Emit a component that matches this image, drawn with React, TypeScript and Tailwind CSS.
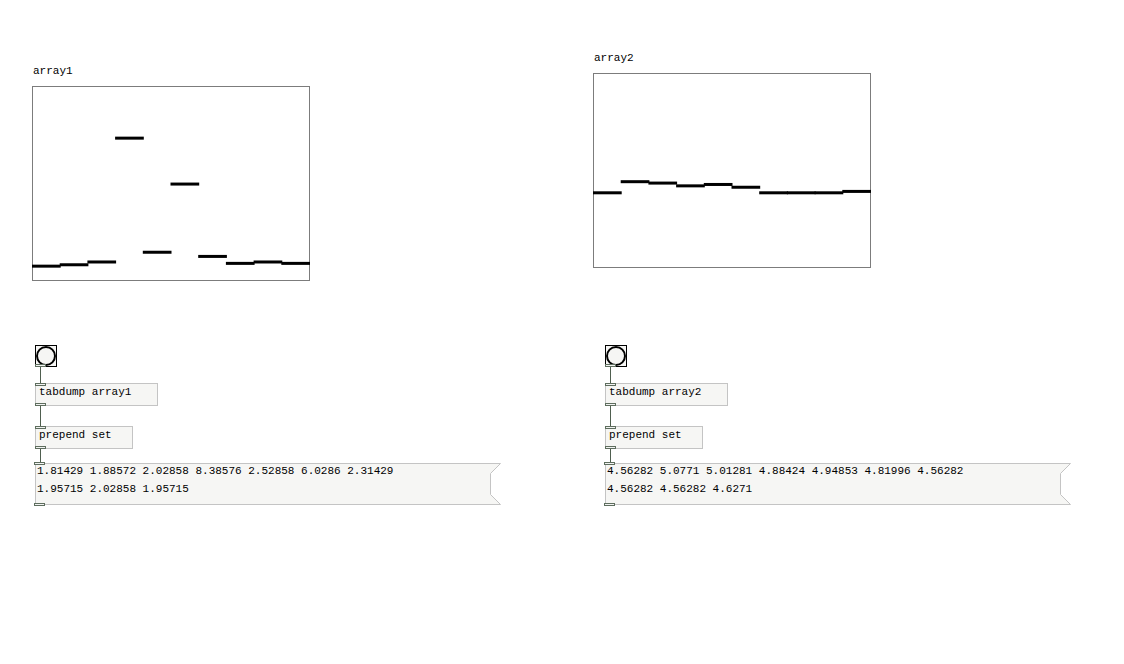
const mono = "[font-family:'Liberation_Mono',monospace] text-[11px] text-black";

const Port = ({ side }: { side: "top" | "bottom" }) => (
  <div
    className={
      "absolute left-[-1px] w-[11px] h-[3px] border border-[#5e6e5e] bg-[#f2f2f2] " +
      (side === "top" ? "top-[-1px]" : "bottom-[-1px]")
    }
  />
);

function Graph({ label, values, y }: { label: string; values: number[]; y: (v: number) => number }) {
  const w = 277;
  const h = 194;
  const step = w / values.length;
  return (
    <div className="flex flex-col">
      <div className={mono + " leading-[14px] pl-px mb-[8px]"}>{label}</div>
      <div className="w-[278px] h-[195px] border border-[#7c7c7c] bg-white">
        <svg width={w} height={h} className="block overflow-visible">
          {values.map((v, i) => (
            <rect key={i} x={i * step - 1} y={y(v) - 1.5} width={step + 1} height={3} fill="#000" />
          ))}
        </svg>
      </div>
    </div>
  );
}

function Bang() {
  return (
    <div className="relative w-[22px] h-[22px] border border-black bg-[#f6f6f4] flex items-center justify-center">
      <div className="w-[20px] h-[20px] rounded-full border-[2px] border-black" />
      <Port side="bottom" />
    </div>
  );
}

function Obj({ text, wide }: { text: string; wide?: boolean }) {
  return (
    <div
      className={
        mono +
        " relative h-[23px] border border-[#c4c4c4] bg-[#f6f6f4] flex items-center pl-[3px] pb-[4px] whitespace-pre " +
        (wide ? "w-[123px]" : "w-[98px]")
      }
    >
      {text}
      <Port side="top" />
      <Port side="bottom" />
    </div>
  );
}

function Msg({ lines }: { lines: string[] }) {
  const W = 466;
  const H = 42;
  return (
    <div className="relative w-[466px] h-[42px]">
      <svg width={W} height={H} className="absolute left-0 top-0">
        <polygon
          points={`0.5,0.5 ${W - 0.5},0.5 ${W - 10.5},10.5 ${W - 10.5},${H - 10.5} ${W - 0.5},${H - 0.5} 0.5,${H - 0.5}`}
          fill="#f6f6f4"
          stroke="#c4c4c4"
        />
      </svg>
      <div className={mono + " relative top-[-1px] pl-[2px] leading-[18px] whitespace-pre"}>
        {lines.map((l, i) => (
          <div key={i}>{l}</div>
        ))}
      </div>
      <Port side="top" />
      <Port side="bottom" />
    </div>
  );
}

const Wire = ({ tall }: { tall: "h-[16px]" | "h-[20px]" | "h-[14px]" }) => (
  <div className={"ml-[5px] w-px bg-[#4f5f4f] " + tall} />
);

function Chain({ name, lines }: { name: string; lines: string[] }) {
  return (
    <div className="flex flex-col">
      <Bang />
      <Wire tall="h-[16px]" />
      <Obj text={`tabdump ${name}`} wide />
      <Wire tall="h-[20px]" />
      <Obj text="prepend set" />
      <Wire tall="h-[14px]" />
      <Msg lines={lines} />
    </div>
  );
}

const a1 = [1.81429, 1.88572, 2.02858, 8.38576, 2.52858, 6.0286, 2.31429, 1.95715, 2.02858, 1.95715];
const a2 = [4.56282, 5.0771, 5.01281, 4.88424, 4.94853, 4.81996, 4.56282, 4.56282, 4.56282, 4.6271];

export default function App() {
  return (
    <div className="w-[1124px] h-[664px] bg-white overflow-hidden pt-[51px] pl-[32px] grid grid-cols-[561px_1fr] grid-rows-[294px_auto] content-start">
      <div className="pt-[13px]">
        <Graph label="array1" values={a1} y={(v) => 300.5 - 19.48 * v - 86} />
      </div>
      <div>
        <Graph label="array2" values={a2} y={(v) => 191.8 - (v - 4.56282) * 21.6 - 73} />
      </div>
      <div className="pl-[3px]">
        <Chain
          name="array1"
          lines={["1.81429 1.88572 2.02858 8.38576 2.52858 6.0286 2.31429", "1.95715 2.02858 1.95715"]}
        />
      </div>
      <div className="pl-[12px]">
        <Chain
          name="array2"
          lines={["4.56282 5.0771 5.01281 4.88424 4.94853 4.81996 4.56282", "4.56282 4.56282 4.6271"]}
        />
      </div>
    </div>
  );
}
